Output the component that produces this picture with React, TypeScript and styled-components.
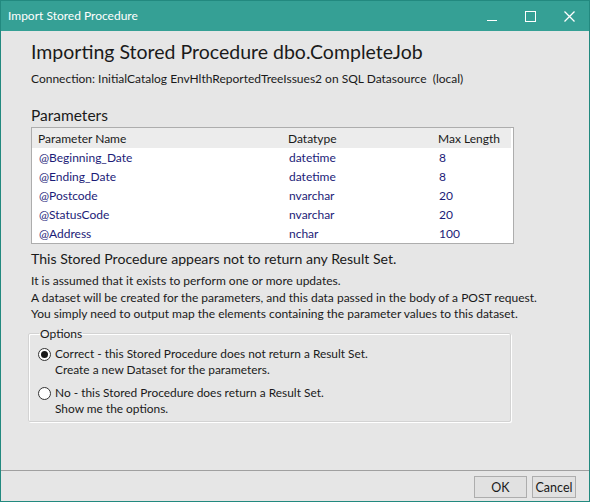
import React from "react";
import styled, { createGlobalStyle } from "styled-components";

const Global = createGlobalStyle`
  html, body {
    margin: 0;
    padding: 0;
    background: #e6e6e6;
  }
  * { box-sizing: border-box; }
`;

const FONT = `Lato, "Noto Sans", sans-serif`;

const Window = styled.div`
  width: 590px;
  height: 502px;
  border: 1px solid #22897f;
  background: #e6e6e6;
  display: flex;
  flex-direction: column;
  font-family: ${FONT};
  color: #1a1a1a;
`;

const TitleBar = styled.div`
  height: 30px;
  flex: none;
  background: #35a095;
  display: flex;
  align-items: center;
  padding-left: 7px;
  color: #ffffff;
  font-size: 12px;
`;

const TitleText = styled.div`
  flex: 1;
  margin-top: -1px;
`;

const WinButton = styled.div`
  width: 39px;
  height: 30px;
  display: flex;
  align-items: center;
  justify-content: center;
`;

const Body = styled.div`
  flex: 1;
  padding: 9px 0 0 30px;
  display: flex;
  flex-direction: column;
`;

const Heading = styled.div`
  font-size: 19.5px;
  line-height: 24px;
`;

const Connection = styled.div`
  font-size: 12px;
  line-height: 16px;
  margin-top: 7px;
`;

const SectionTitle = styled.div`
  font-size: 15.5px;
  line-height: 20px;
  margin-top: 18px;
`;

const Table = styled.div`
  width: 483px;
  margin-top: 2px;
  border: 1px solid #adadad;
  background: #ffffff;
`;

const Row = styled.div<{ $head?: boolean }>`
  display: grid;
  grid-template-columns: 250px 150px 1fr;
  height: ${(p) => (p.$head ? "20px" : "19px")};
  align-items: center;
  padding-left: ${(p) => (p.$head ? "6px" : "7px")};
  margin-right: ${(p) => (p.$head ? "2px" : "0")};
  background: ${(p) => (p.$head ? "#ececec" : "transparent")};
  color: ${(p) => (p.$head ? "#1a1a1a" : "#1c1c78")};
  font-size: 12px;
`;

const Notice = styled.div`
  font-size: 14.1px;
  line-height: 19px;
  margin-top: 5px;
`;

const Paragraph = styled.div`
  font-size: 12px;
  line-height: 16.5px;
  margin-top: 5px;
`;

const Group = styled.fieldset`
  width: 483px;
  margin: 4px 0 0 -3px;
  padding: 5px 0 6px 9px;
  border: 1px solid #d3d3d3;
  border-radius: 2px;
  box-shadow: inset 1px 1px 0 #ffffff, 1px 1px 0 #ffffff;
  height: 95px;
`;

const Legend = styled.legend`
  font-size: 12px;
  padding: 0 1px;
  margin-left: 1px;
  line-height: 14px;
`;

const Option = styled.label`
  display: flex;
  align-items: flex-start;
  gap: 4px;
  font-size: 11.9px;
  line-height: 16px;
  margin-bottom: 7px;
`;

const Radio = styled.span<{ $checked?: boolean }>`
  width: 13px;
  height: 13px;
  margin-top: 2px;
  border-radius: 50%;
  border: 1px solid #333333;
  background: #ffffff;
  flex: none;
  display: flex;
  align-items: center;
  justify-content: center;
  &::after {
    content: "";
    width: 7px;
    height: 7px;
    border-radius: 50%;
    background: ${(p) => (p.$checked ? "#1a1a1a" : "transparent")};
  }
`;

const Footer = styled.div`
  height: 31px;
  flex: none;
  border-top: 1px solid #a0a0a0;
  display: flex;
  justify-content: flex-end;
  align-items: flex-start;
  gap: 5px;
  padding: 5px 13px 0 0;
`;

const Button = styled.button<{ $w: number }>`
  width: ${(p) => p.$w}px;
  height: 22px;
  border: 1px solid #adadad;
  background: #e1e1e1;
  font-family: ${FONT};
  font-size: 12.5px;
  color: #1a1a1a;
  padding: 0;
`;

const params = [
  ["@Beginning_Date", "datetime", "8"],
  ["@Ending_Date", "datetime", "8"],
  ["@Postcode", "nvarchar", "20"],
  ["@StatusCode", "nvarchar", "20"],
  ["@Address", "nchar", "100"],
];

export default function App() {
  return (
    <>
      <Global />
      <Window>
        <TitleBar>
          <TitleText>Import Stored Procedure</TitleText>
          <WinButton>
            <svg width="10" height="10" viewBox="0 0 10 10">
              <path d="M0 9.5h10" stroke="#fff" strokeWidth="1" />
            </svg>
          </WinButton>
          <WinButton>
            <svg width="11" height="11" viewBox="0 0 11 11">
              <rect x="0.5" y="0.5" width="10" height="10" fill="none" stroke="#fff" strokeWidth="1" />
            </svg>
          </WinButton>
          <WinButton>
            <svg width="11" height="11" viewBox="0 0 11 11">
              <path d="M0.5 0.5L10.5 10.5M10.5 0.5L0.5 10.5" stroke="#fff" strokeWidth="1.3" />
            </svg>
          </WinButton>
        </TitleBar>
        <Body>
          <Heading>Importing Stored Procedure dbo.CompleteJob</Heading>
          <Connection>
            Connection: InitialCatalog EnvHlthReportedTreeIssues2 on SQL Datasource&nbsp;&nbsp;(local)
          </Connection>
          <SectionTitle>Parameters</SectionTitle>
          <Table>
            <Row $head>
              <span>Parameter Name</span>
              <span>Datatype</span>
              <span>Max Length</span>
            </Row>
            {params.map((p) => (
              <Row key={p[0]}>
                <span>{p[0]}</span>
                <span>{p[1]}</span>
                <span>{p[2]}</span>
              </Row>
            ))}
          </Table>
          <Notice>This Stored Procedure appears not to return any Result Set.</Notice>
          <Paragraph>
            It is assumed that it exists to perform one or more updates.
            <br />
            A dataset will be created for the parameters, and this data passed in the body of a POST request.
            <br />
            You simply need to output map the elements containing the parameter values to this dataset.
          </Paragraph>
          <Group>
            <Legend>Options</Legend>
            <Option>
              <Radio $checked />
              <span>
                Correct - this Stored Procedure does not return a Result Set.
                <br />
                Create a new Dataset for the parameters.
              </span>
            </Option>
            <Option>
              <Radio />
              <span>
                No - this Stored Procedure does return a Result Set.
                <br />
                Show me the options.
              </span>
            </Option>
          </Group>
        </Body>
        <Footer>
          <Button $w={53}>OK</Button>
          <Button $w={44}>Cancel</Button>
        </Footer>
      </Window>
    </>
  );
}
